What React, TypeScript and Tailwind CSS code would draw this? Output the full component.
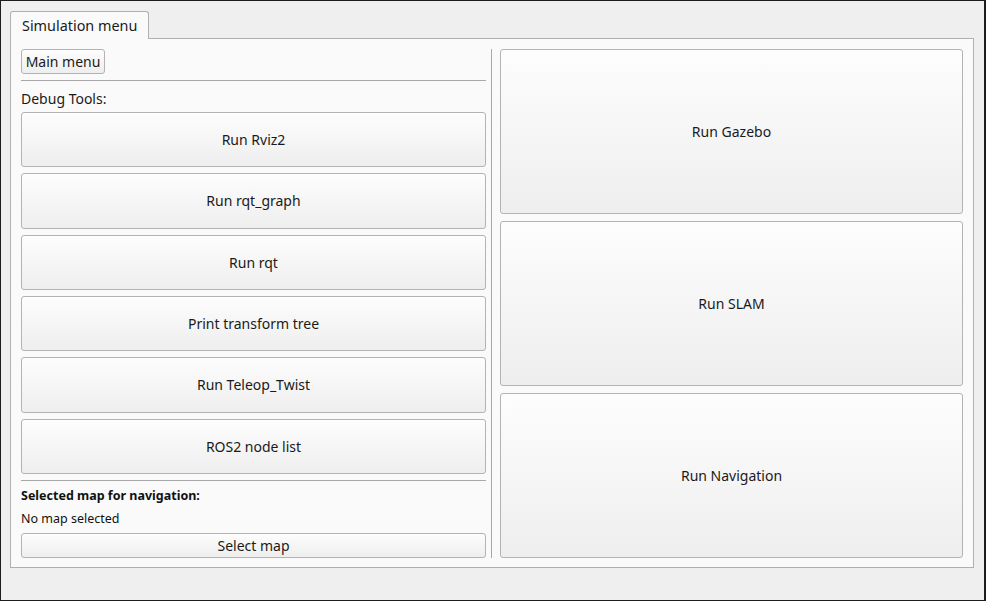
import React from "react";

const btn =
  "flex items-center justify-center rounded-[3px] border border-[#b3b3b3] bg-gradient-to-b from-[#fdfdfd] to-[#eeeeee] text-[14px] text-[#1a1a1a]";

export default function App() {
  const debug = [
    "Run Rviz2",
    "Run rqt_graph",
    "Run rqt",
    "Print transform tree",
    "Run Teleop_Twist",
    "ROS2 node list",
  ];
  const right = ["Run Gazebo", "Run SLAM", "Run Navigation"];
  return (
    <div
      className="w-[986px] h-[601px] border-l border-t border-b border-r-2 border-[#1c1c1c] bg-[#efefef] flex flex-col pt-[10px] pl-[9px] pr-[10px]"
      style={{ fontFamily: '"Noto Sans", "DejaVu Sans", sans-serif' }}
    >
      <div className="flex h-[27px]">
        <div className="relative z-10 w-[139px] h-[28px] border border-b-0 border-[#b0b0b0] rounded-t-[3px] bg-[#fafafa] flex items-center pl-[11px] text-[14.4px] text-[#1a1a1a]">
          Simulation menu
        </div>
      </div>
      <div className="w-[964px] h-[530px] border border-[#b0b0b0] bg-[#fafafa] flex p-[10px] pb-[9px]">
        <div className="w-[465px] flex flex-col">
          <div className="h-[25px] flex">
            <div className={btn + " w-[84px] h-[25px]"}>Main menu</div>
          </div>
          <div className="mt-[6px] h-px bg-[#a8a8a8]" />
          <div className="h-[31px] flex items-center text-[14px] text-[#1a1a1a] pt-[3px]">
            Debug Tools:
          </div>
          <div className="flex flex-col gap-[6px] h-[362px]">
            {debug.map((t) => (
              <div key={t} className={btn + " flex-1 text-[14.4px]"}>
                {t}
              </div>
            ))}
          </div>
          <div className="mt-[6px] h-px bg-[#a8a8a8]" />
          <div className="h-[25px] flex items-end text-[12.5px] font-bold text-[#111]">
            Selected map for navigation:
          </div>
          <div className="h-[24px] flex items-center text-[12.5px] text-[#111] pt-[2px]">
            No map selected
          </div>
          <div className={btn + " h-[25px] mt-auto"}>Select map</div>
        </div>
        <div className="ml-[5px] w-px bg-[#a8a8a8]" />
        <div className="ml-[8px] flex-1 flex flex-col gap-[7px]">
          {right.map((t) => (
            <div key={t} className={btn + " flex-1"}>
              {t}
            </div>
          ))}
        </div>
      </div>
    </div>
  );
}
